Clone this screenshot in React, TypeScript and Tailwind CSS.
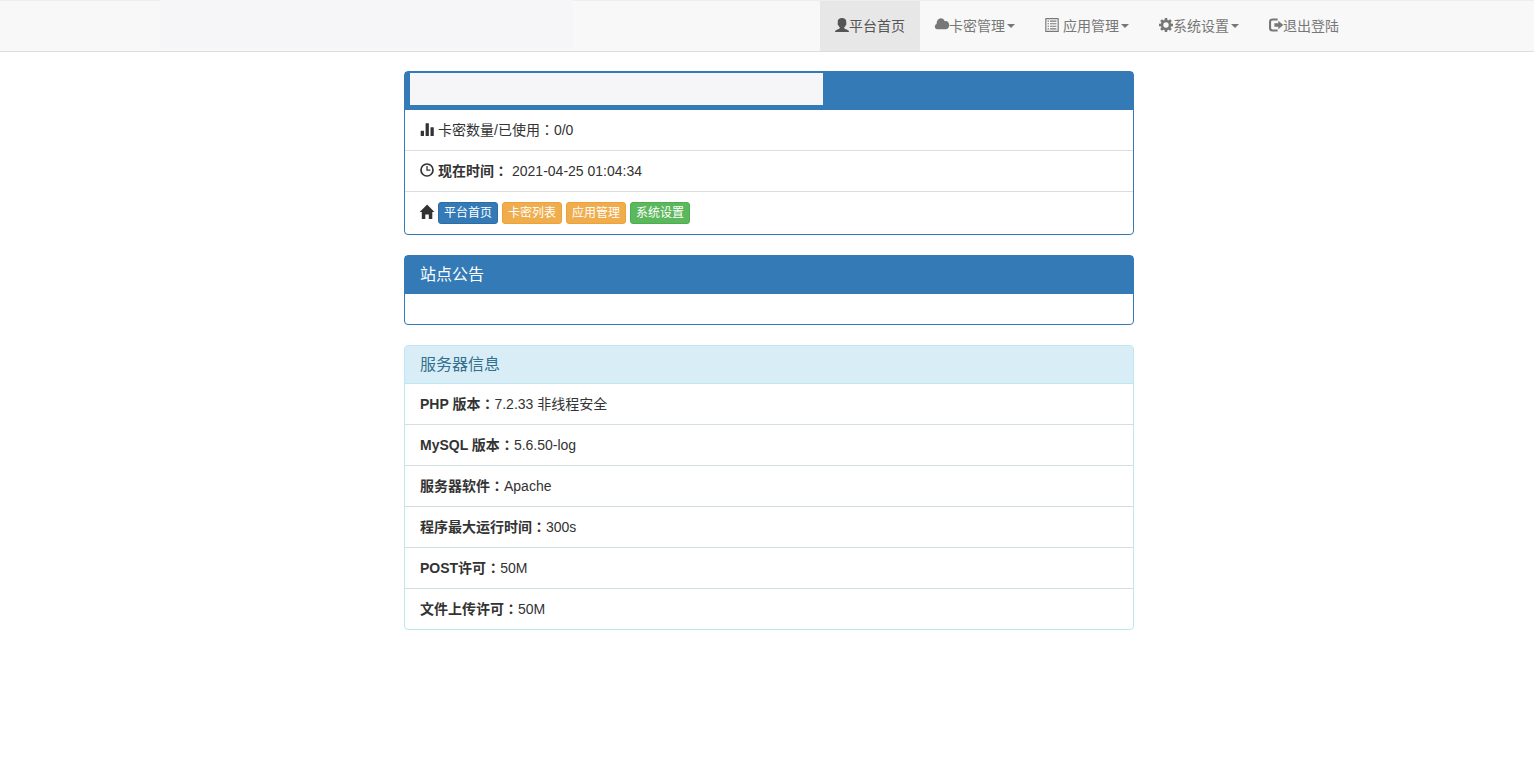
import type { ReactNode } from "react";

type IconProps = { children: ReactNode };

function Icon({ children }: IconProps) {
  return (
    <svg viewBox="0 0 1200 1200" fill="currentColor" aria-hidden="true" className="mb-0.5 size-3.5 shrink-0 overflow-visible">
      {children}
    </svg>
  );
}

const UserIcon = () => (
  <Icon>
    <path d="M600 0C380 0 235 110 235 300c0 60 5 95 10 130-25 20-30 50-20 95 10 50 35 80 60 90 20 70 65 135 125 175v60c-30 60-120 95-210 140C90 1045 0 1070 0 1200h1200c0-130-90-155-200-210-90-45-180-80-210-140v-60c60-40 105-105 125-175 25-10 50-40 60-90 10-45 5-75-20-95 5-35 10-70 10-130C965 110 820 0 600 0z" />
  </Icon>
);

const CloudIcon = () => (
  <Icon>
    <path
      transform="translate(0 1330) scale(1 -1.2)"
      d="M503 1089q110 0 200.5 -59.5t134.5 -156.5q44 14 90 14q120 0 205 -86.5t85 -206.5q0 -121 -85 -207.5t-205 -86.5h-750q-79 0 -135.5 57t-56.5 137q0 69 42.5 122.5t108.5 67.5q-2 12 -2 37q0 153 108 260.5t260 107.5z"
    />
  </Icon>
);

const ListIcon = () => (
  <Icon>
    <path
      fillRule="evenodd"
      d="M70 0h1060q50 0 50 50v1100q0 50-50 50H70q-50 0-50-50V50Q20 0 70 0zM120 100v1000h960V100zM220 220h120v100H220zM430 220h550v100H430zM220 440h120v100H220zM430 440h550v100H430zM220 660h120v100H220zM430 660h550v100H430zM220 880h120v100H220zM430 880h550v100H430z"
    />
  </Icon>
);

const CogIcon = () => (
  <Icon>
    <g>
      <path d="M500 0h200l35 230H465z" />
      <path d="M500 0h200l35 230H465z" transform="rotate(45 600 600)" />
      <path d="M500 0h200l35 230H465z" transform="rotate(90 600 600)" />
      <path d="M500 0h200l35 230H465z" transform="rotate(135 600 600)" />
      <path d="M500 0h200l35 230H465z" transform="rotate(180 600 600)" />
      <path d="M500 0h200l35 230H465z" transform="rotate(225 600 600)" />
      <path d="M500 0h200l35 230H465z" transform="rotate(270 600 600)" />
      <path d="M500 0h200l35 230H465z" transform="rotate(315 600 600)" />
      <circle cx="600" cy="600" r="335" fill="none" stroke="currentColor" strokeWidth="210" />
    </g>
  </Icon>
);

const LogoutIcon = () => (
  <Icon>
    <path d="M740 40H300Q0 40 0 340v520q0 300 300 300h440V980H300q-120 0-120-120V340q0-120 120-120h440z" />
    <path d="M800 230l400 340q30 30 0 60L800 970V740H460V460h340z" />
  </Icon>
);

const StatsIcon = () => (
  <Icon>
    <path d="M90 760h220q30 0 30 30v380q0 30-30 30H90q-30 0-30-30V790q0-30 30-30zM510 100h220q30 0 30 30v1040q0 30-30 30H510q-30 0-30-30V130q0-30 30-30zM930 440h220q30 0 30 30v700q0 30-30 30H930q-30 0-30-30V470q0-30 30-30z" />
  </Icon>
);

const ClockIcon = () => (
  <Icon>
    <circle cx="600" cy="600" r="515" fill="none" stroke="currentColor" strokeWidth="145" />
    <path d="M545 260h110v290h235v110H545z" />
  </Icon>
);

const HomeIcon = () => (
  <Icon>
    <path
      transform="translate(-45 1210) scale(1 -1)"
      d="M18 618l620 608q8 7 18.5 7t17.5 -7l608 -608q8 -8 5.5 -13t-12.5 -5h-175v-575q0 -10 -7.5 -17.5t-17.5 -7.5h-250q-10 0 -17.5 7.5t-7.5 17.5v375h-300v-375q0 -10 -7.5 -17.5t-17.5 -7.5h-250q-10 0 -17.5 7.5t-7.5 17.5v575h-175q-10 0 -12.5 5t5.5 13z"
    />
  </Icon>
);

const Caret = () => (
  <svg viewBox="0 0 8 4" fill="currentColor" aria-hidden="true" className="ml-0.5 h-1 w-2">
    <path d="M0 0h8L4 4z" />
  </svg>
);

const Colon = () => <span className="font-['Noto_Sans_CJK_TC',sans-serif] leading-none">：</span>;

const navItem = "flex h-[50px] items-center px-[15px] text-[#777]";
const listItem = "flex items-center px-[15px] py-2.5";
const smallButton = "flex h-[22px] items-center rounded-[3px] border px-[5px] text-xs text-white";

const serverInfo = [
  { label: "PHP 版本", value: "7.2.33 非线程安全" },
  { label: "MySQL 版本", value: "5.6.50-log" },
  { label: "服务器软件", value: "Apache" },
  { label: "程序最大运行时间", value: "300s" },
  { label: "POST许可", value: "50M" },
  { label: "文件上传许可", value: "50M" },
];

export default function App() {
  return (
    <div className="min-h-screen bg-white font-['Liberation_Sans','Noto_Sans_CJK_SC',sans-serif] text-sm leading-5 text-[#333]">
      <header className="border-y border-t-[#eee] border-b-[#ddd] bg-[#f8f8f8] pl-1">
        <div className="mx-auto flex max-w-[1170px] justify-between">
          <div className="-mt-px -ml-6 h-12 w-[413px] bg-[#f6f6f9]" />
          <nav className="flex">
            <a href="#home" className="flex h-[50px] items-center bg-[#e7e7e7] px-[15px] text-[#555]">
              <UserIcon />
              平台首页
            </a>
            <button type="button" className={navItem}>
              <CloudIcon />
              卡密管理
              <Caret />
            </button>
            <button type="button" className={navItem}>
              <ListIcon />
              <span className="ml-1">应用管理</span>
              <Caret />
            </button>
            <button type="button" className={navItem}>
              <CogIcon />
              系统设置
              <Caret />
            </button>
            <a href="#logout" className={navItem}>
              <LogoutIcon />
              退出登陆
            </a>
          </nav>
        </div>
      </header>

      <main className="mt-[19px] pl-1">
        <div className="mx-auto flex max-w-[730px] flex-col gap-5">
          <section className="rounded-[4px] border border-[#337ab7]">
            <div className="bg-[#337ab7] pt-px pb-[5px] pl-[5px]">
              <div className="h-8 w-[413px] bg-[#f6f6f9]" />
            </div>
            <ul className="divide-y divide-[#ddd]">
              <li className={`${listItem} gap-1`}>
                <StatsIcon />
                <span>
                  卡密数量/已使用
                  <Colon />
                  0/0
                </span>
              </li>
              <li className={`${listItem} gap-1`}>
                <ClockIcon />
                <b className="font-bold">
                  现在时间
                  <Colon />
                </b>
                <span>2021-04-25 01:04:34</span>
              </li>
              <li className={`${listItem} gap-1`}>
                <HomeIcon />
                <a href="#home" className={`${smallButton} border-[#2e6da4] bg-[#337ab7]`}>
                  平台首页
                </a>
                <a href="#cards" className={`${smallButton} border-[#eea236] bg-[#f0ad4e]`}>
                  卡密列表
                </a>
                <a href="#apps" className={`${smallButton} border-[#eea236] bg-[#f0ad4e]`}>
                  应用管理
                </a>
                <a href="#settings" className={`${smallButton} border-[#4cae4c] bg-[#5cb85c]`}>
                  系统设置
                </a>
              </li>
            </ul>
          </section>

          <section className="rounded-[4px] border border-[#337ab7]">
            <h3 className="flex h-[38px] items-center bg-[#337ab7] px-[15px] text-base text-white">站点公告</h3>
            <div className="p-[15px]" />
          </section>

          <section className="rounded-[4px] border border-[#bce8f1]">
            <h3 className="flex h-[38px] items-center border-b border-[#bce8f1] bg-[#d9edf7] px-[15px] text-base text-[#31708f]">
              服务器信息
            </h3>
            <ul className="divide-y divide-[#d3dfe2]">
              {serverInfo.map(({ label, value }) => (
                <li key={label} className={listItem}>
                  <b className="font-bold">
                    {label}
                    <Colon />
                  </b>
                  {value}
                </li>
              ))}
            </ul>
          </section>
        </div>
      </main>
    </div>
  );
}
